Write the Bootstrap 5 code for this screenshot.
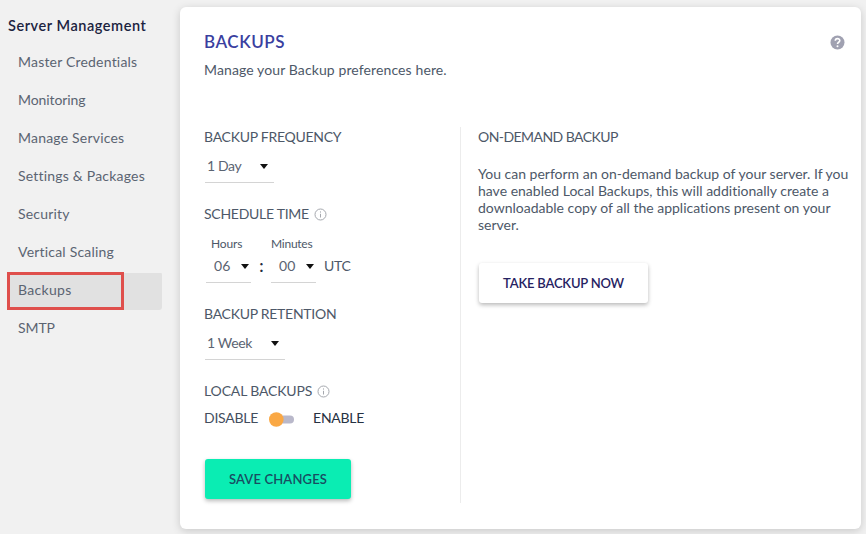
<!DOCTYPE html>
<html lang="en">
<head>
<meta charset="utf-8">
<meta name="viewport" content="width=device-width, initial-scale=1">
<title>Backups</title>
<link href="https://cdn.jsdelivr.net/npm/bootstrap@5.3.0/dist/css/bootstrap.min.css" rel="stylesheet">
<style>
body{font-family:Lato,"Open Sans",sans-serif;font-size:14px;line-height:20px;color:#4d5868;background:#f1f1f1;height:534px;overflow:hidden;font-variant-ligatures:none}
.side{width:180px;padding:16px 18px 0 8px}
.side-title{font-size:14.5px;font-weight:600;color:#1b2340;letter-spacing:.55px;margin-bottom:8px;white-space:nowrap}
.side .nav-link{height:38px;padding:8px 10px 0;line-height:20px;color:#5b6472;letter-spacing:.2px;border-radius:3px;white-space:nowrap}
.side .nav-link.tight{letter-spacing:-.1px}
.side .nav-link.active{letter-spacing:.3px;background:linear-gradient(#e1e1e1,#e1e1e1) 0 1px/100% 37px no-repeat}
.marker{left:-1px;top:0;width:117px;height:38px;border:3px solid #df4f4c}
.panel{width:681px;height:522px;margin-top:7px;border:0;border-radius:6px;padding:24px 13px 0 24px;box-shadow:0 2px 9px rgba(0,0,0,.17)}
.panel h1{font-size:17px;line-height:20px;font-weight:600;color:#3a3f9f;letter-spacing:.55px;padding-top:1px}
.sub{margin-top:8px;letter-spacing:.11px}
.help{margin:4px 3px 0 0}
.cols{margin-top:47px;height:376px}
.left{width:257px;border-right:1px solid #ececec}
.right{padding-left:17px;width:387px}
.lbl{height:20px;gap:5px;white-space:nowrap;letter-spacing:-.27px}
.lbl.demand{letter-spacing:-.56px}
.lbl.loc{letter-spacing:-.15px}
.next{margin-top:21px}
.pick{height:27px;border-bottom:1px solid #d4d4d4;margin:9px 0 0 1px;padding:0 6px 6px 2px;color:#5b6472;letter-spacing:-.35px}
.pick.day{width:69px}
.pick.week{width:80px}
.pick.hm{width:45px;padding:0 2px 6px 8px;margin:4px 0 0;letter-spacing:.2px}
.caret{width:0;height:0;border:4.5px solid transparent;border-top:5px solid #111;border-bottom:0}
.hm-row{margin:12px 0 0 2px}
.tiny{font-size:12px;line-height:16px;padding-left:5px;letter-spacing:-.15px}
.mins{padding-left:0;letter-spacing:-.25px}
.colon{width:20px;padding:20px 0 0 1px;font-size:17px;font-weight:600;color:#222b40;text-align:center}
.utc{padding:20px 0 0 8px;letter-spacing:-.3px}
.switch-line{margin-top:7px;color:#434e5e;letter-spacing:-.25px}
.toggle-track{width:25px;height:15px;margin:3px 19px 0 11px}
.enable{color:#263142}
.btn-own{height:40px;border:0;border-radius:3px;font-size:13px;font-weight:600;padding:1px 0 0;box-shadow:0 2px 4px rgba(0,0,0,.28);white-space:nowrap;margin:31px 0 0 1px}
.save{width:146px;background:#0aedb3;color:#184d62;letter-spacing:.15px}
.take{width:169px;background:#fff;color:#262262;letter-spacing:-.2px}
.para{line-height:17px;margin-top:18px;margin-bottom:30px;white-space:nowrap}
</style>
<script src="https://cdn.jsdelivr.net/npm/bootstrap@5.3.0/dist/js/bootstrap.bundle.min.js"></script>
</head>
<body class="d-flex align-items-start">
<aside class="side flex-shrink-0">
  <div class="side-title">Server Management</div>
  <nav class="nav flex-column">
    <a class="nav-link" href="#">Master Credentials</a>
    <a class="nav-link tight" href="#">Monitoring</a>
    <a class="nav-link" href="#">Manage Services</a>
    <a class="nav-link" href="#">Settings &amp; Packages</a>
    <a class="nav-link" href="#">Security</a>
    <a class="nav-link" href="#">Vertical Scaling</a>
    <a class="nav-link active position-relative" href="#">Backups<span class="marker position-absolute"></span></a>
    <a class="nav-link tight" href="#">SMTP</a>
  </nav>
</aside>
<main class="panel card flex-shrink-0">
  <header class="d-flex justify-content-between align-items-start">
    <div>
      <h1 class="mb-0">BACKUPS</h1>
      <div class="sub">Manage your Backup preferences here.</div>
    </div>
    <svg class="help" width="15" height="15" viewBox="0 0 15 15"><circle cx="7.5" cy="7.5" r="7" fill="#a0a1b1"/><path d="M5.3 5.8C5.3 2.9 9.8 3 9.8 5.6 9.8 7.2 7.5 7.3 7.5 9" fill="none" stroke="#fff" stroke-width="1.6"/><circle cx="7.5" cy="11.2" r="1" fill="#fff"/></svg>
  </header>
  <div class="cols d-flex">
    <section class="left flex-shrink-0">
      <div class="lbl d-flex align-items-center">BACKUP FREQUENCY</div>
      <div class="pick day d-flex align-items-center justify-content-between"><span>1 Day</span><i class="caret"></i></div>
      <div class="lbl next d-flex align-items-center"><span>SCHEDULE TIME</span>
        <svg width="13" height="13" viewBox="0 0 13 13" fill="none" stroke="#a5a8ae"><circle cx="6.5" cy="6.5" r="5.5"/><path d="M6.5 5.8v3.7M6.5 3.4v1.2"/></svg></div>
      <div class="hm-row d-flex">
        <div><div class="tiny">Hours</div><div class="pick hm d-flex align-items-center justify-content-between"><span>06</span><i class="caret"></i></div></div>
        <div class="colon">:</div>
        <div><div class="tiny mins">Minutes</div><div class="pick hm d-flex align-items-center justify-content-between"><span>00</span><i class="caret"></i></div></div>
        <div class="utc">UTC</div>
      </div>
      <div class="lbl next d-flex align-items-center">BACKUP RETENTION</div>
      <div class="pick week d-flex align-items-center justify-content-between"><span>1 Week</span><i class="caret"></i></div>
      <div class="lbl next loc d-flex align-items-center"><span>LOCAL BACKUPS</span>
        <svg width="13" height="13" viewBox="0 0 13 13" fill="none" stroke="#a5a8ae"><circle cx="6.5" cy="6.5" r="5.5"/><path d="M6.5 5.8v3.7M6.5 3.4v1.2"/></svg></div>
      <div class="switch-line d-flex align-items-center">DISABLE<svg class="toggle-track" viewBox="0 0 25 15"><rect x="6" y="3.5" width="19" height="8" rx="4" fill="#b9b8ca"/><circle cx="7.3" cy="7.5" r="7.3" fill="#faa844"/></svg><span class="enable">ENABLE</span></div>
      <button class="btn btn-own save" type="button">SAVE CHANGES</button>
    </section>
    <section class="right">
      <div class="lbl demand d-flex align-items-center">ON-DEMAND BACKUP</div>
      <p class="para">You can perform an on-demand backup of your server. If you<br>have enabled Local Backups, this will additionally create a<br>downloadable copy of all the applications present on your<br>server.</p>
      <button class="btn btn-own take mt-0" type="button">TAKE BACKUP NOW</button>
    </section>
  </div>
</main>
</body>
</html>
